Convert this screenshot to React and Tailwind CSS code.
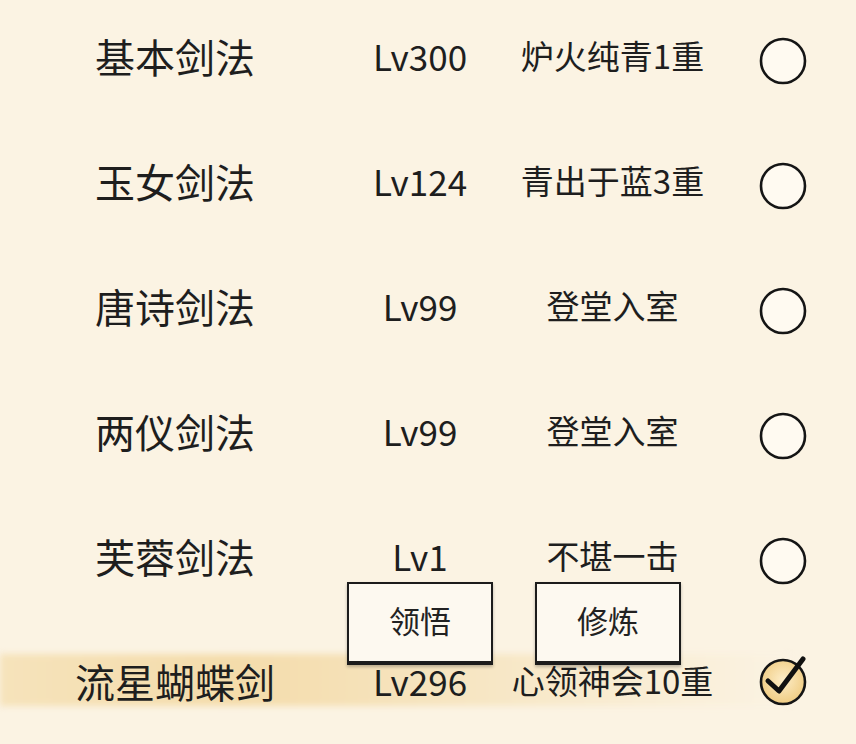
import React from 'react';

const skills = [
  { name: '基本剑法', lv: 'Lv300', realm: '炉火纯青1重' },
  { name: '玉女剑法', lv: 'Lv124', realm: '青出于蓝3重' },
  { name: '唐诗剑法', lv: 'Lv99', realm: '登堂入室' },
  { name: '两仪剑法', lv: 'Lv99', realm: '登堂入室' },
  { name: '芙蓉剑法', lv: 'Lv1', realm: '不堪一击' },
  { name: '流星蝴蝶剑', lv: 'Lv296', realm: '心领神会10重', active: true },
];

function Radio({ checked }) {
  return (
    <svg width="60" height="60" viewBox="0 0 60 60" className={checked ? '' : 'mt-2'}>
      <defs>
        <radialGradient id="gold" cx="50%" cy="45%" r="55%">
          <stop offset="0%" stopColor="#fdedc8" />
          <stop offset="100%" stopColor="#f0cc82" />
        </radialGradient>
      </defs>
      <circle cx="30" cy="31" r="22" fill={checked ? 'url(#gold)' : '#fffaf1'} stroke="#151515" strokeWidth="2.6" />
      {checked && (
        <path d="M15 30 L26 40 L50 8" fill="none" stroke="#111" strokeWidth="5" strokeLinecap="round" strokeLinejoin="round" />
      )}
    </svg>
  );
}

function ActionButton({ label }) {
  return (
    <button className="w-[146px] h-[83px] bg-[#fdf9f0] border-2 border-b-[4px] border-[#1c1c1c] shadow-[0_2px_3px_rgba(0,0,0,0.25)] text-[31px] text-[#222] flex items-center justify-center pb-1">
      {label}
    </button>
  );
}

export default function App() {
  return (
    <div
      className="w-[856px] h-[744px] overflow-hidden bg-[#fbf3e3] text-[#1e1e1e]"
      style={{ fontFamily: '"Noto Sans CJK SC", "Noto Sans", sans-serif' }}
    >
      <div className="relative -mt-[7px]">
        {skills.map((s) => (
          <div key={s.name} className="relative h-[125px] flex items-center">
            {s.active && (
              <div className="absolute left-0 w-[790px] top-[36px] h-[52px] blur-[3px] bg-gradient-to-r from-[#f6e3bb] via-[#f4dcab] via-30% to-[#fbf3e3]" />
            )}
            <div className="relative w-[350px] text-center text-[40px] leading-none">{s.name}</div>
            <div className="relative w-[140px] text-center text-[35px] leading-none">{s.lv}</div>
            <div className="relative w-[245px] text-center text-[33px] leading-none">{s.realm}</div>
            <div className="relative w-[96px] flex justify-center">
              <Radio checked={s.active} />
            </div>
          </div>
        ))}
        <div className="absolute left-[347px] top-[589px] flex gap-[42px]">
          <ActionButton label="领悟" />
          <ActionButton label="修炼" />
        </div>
      </div>
    </div>
  );
}
